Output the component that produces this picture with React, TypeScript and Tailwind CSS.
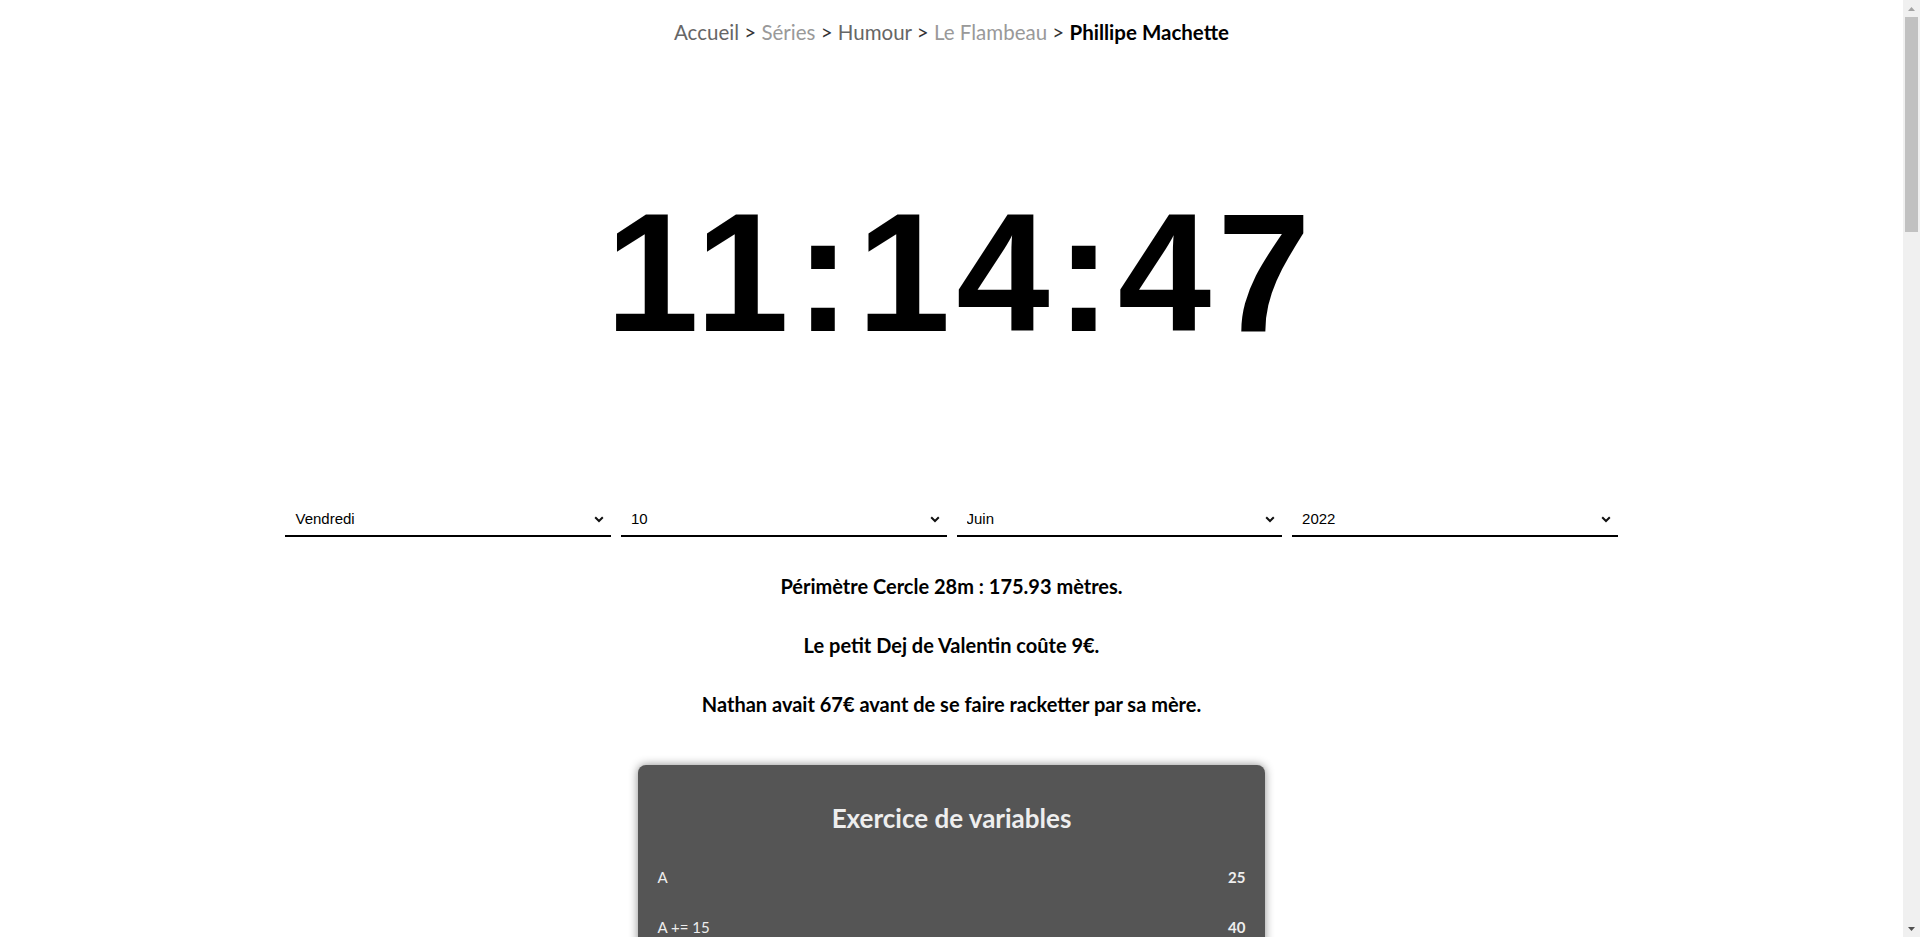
import { useState } from 'react';

const jours = ['Lundi', 'Mardi', 'Mercredi', 'Jeudi', 'Vendredi', 'Samedi', 'Dimanche'];
const mois = ['Janvier', 'Février', 'Mars', 'Avril', 'Mai', 'Juin', 'Juillet', 'Août', 'Septembre', 'Octobre', 'Novembre', 'Décembre'];
const nums = Array.from({ length: 31 }, (_, i) => String(i + 1));
const annees = ['2020', '2021', '2022', '2023', '2024'];

const rows = [
    { label: 'A', value: '25' },
    { label: 'A += 15', value: '40' },
    { label: 'A -= 5', value: '35' },
    { label: 'A *= 2', value: '70' },
    { label: 'A /= 7', value: '10' },
    { label: 'A %= 3', value: '1' },
    { label: 'A++', value: '2' },
    { label: 'A--', value: '1' },
];

function DateSelect({ options, value }: { options: string[]; value: string }) {
    const [v, setV] = useState(value);
    return (
        <div className="relative flex-1">
            <select
                value={v}
                onChange={(e) => setV(e.target.value)}
                className="w-full h-[36px] appearance-none bg-white border-0 border-b-2 border-black pl-[10px] pt-[2px] pr-6 text-[15px] text-black font-['Liberation_Sans',Arial,sans-serif] outline-none"
            >
                {options.map((o) => (
                    <option key={o} value={o}>{o}</option>
                ))}
            </select>
            <svg className="pointer-events-none absolute right-[7px] top-[15px]" width="10" height="7" viewBox="0 0 10 7">
                <path d="M1.2 1.3 L5 5 L8.8 1.3" fill="none" stroke="#111" strokeWidth="2" />
            </svg>
        </div>
    );
}

// fake windows scrollbar, the page is ~4x the viewport
function Scrollbar() {
    return (
        <div className="flex h-full w-[17px] shrink-0 flex-col bg-[#f0f0f0]">
            <div className="flex h-[17px] items-center justify-center">
                <svg width="7" height="4" viewBox="0 0 7 4"><path d="M0 4 L3.5 0 L7 4 Z" fill="#a3a3a3" /></svg>
            </div>
            <div className="flex-1 px-[2px]">
                <div className="h-[215px] bg-[#c1c1c1]" />
            </div>
            <div className="flex h-[17px] items-center justify-center">
                <svg width="7" height="4" viewBox="0 0 7 4"><path d="M0 0 L3.5 4 L7 0 Z" fill="#505050" /></svg>
            </div>
        </div>
    );
}

export default function App() {
    return (
        <div className="flex h-[937px] w-full overflow-hidden bg-white">
            <main className="min-w-0 flex-1 overflow-hidden font-['Lato','Open_Sans',sans-serif] text-black">
                <nav className="pt-[19px] text-center text-[20.5px] leading-[26px]">
                    <span className="text-[#666]">Accueil</span>
                    <span className="text-[#333]"> &gt; </span>
                    <span className="text-[#999]">Séries</span>
                    <span className="text-[#333]"> &gt; </span>
                    <span className="text-[#666]">Humour</span>
                    <span className="text-[#333]"> &gt; </span>
                    <span className="text-[#999]">Le Flambeau</span>
                    <span className="text-[#333]"> &gt; </span>
                    <span className="font-bold text-black">Phillipe Machette</span>
                </nav>

                <div className="mt-[132px] pl-[19px] text-center font-['Liberation_Sans',Arial,sans-serif] font-bold text-[168px] leading-[193px] tracking-[6px]">
                    11:14:47
                </div>

                <div className="mx-auto mt-[131px] flex w-[70%] gap-[10px]">
                    <DateSelect options={jours} value="Vendredi" />
                    <DateSelect options={nums} value="10" />
                    <DateSelect options={mois} value="Juin" />
                    <DateSelect options={annees} value="2022" />
                </div>

                <div className="mt-[37px] flex flex-col items-center gap-[35px] text-[20px] font-bold leading-[24px]">
                    <p>Périmètre Cercle 28m : 175.93 mètres.</p>
                    <p>Le petit Dej de Valentin coûte 9€.</p>
                    <p>Nathan avait 67€ avant de se faire racketter par sa mère.</p>
                </div>

                <div className="mx-auto mt-[49px] mb-[2000px] w-[33%] rounded-lg bg-[#555555] px-5 pt-[37px] pb-8 text-[#eeeeee] shadow-[0_0_10px_rgba(0,0,0,0.45)]">
                    <h2 className="text-center text-[26px] font-bold leading-[32px]">Exercice de variables</h2>
                    <div className="mt-[18px] flex flex-col">
                        {rows.map((r) => (
                            <div key={r.label} className="flex h-[50px] items-center justify-between text-[15px]">
                                <span>{r.label}</span>
                                <span className="font-bold">{r.value}</span>
                            </div>
                        ))}
                    </div>
                </div>
            </main>
            <Scrollbar />
        </div>
    );
}
